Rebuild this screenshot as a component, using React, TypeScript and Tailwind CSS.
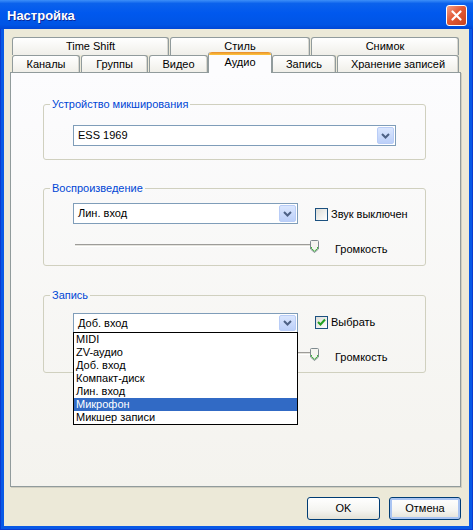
import React from "react";

function Chevron() {
  return (
    <svg width="9" height="6" viewBox="0 0 9 6">
      <path d="M1 1 L4.5 4.5 L8 1" fill="none" stroke="#4d6185" strokeWidth="2" />
    </svg>
  );
}

function ComboBox({ value, className }: { value: string; className: string }) {
  return (
    <div className={`flex items-stretch border border-[#7f9db9] bg-white p-[1px] ${className}`}>
      <span className="flex flex-1 items-center pl-[3px]">{value}</span>
      <span className="flex w-[17px] items-center justify-center rounded-[2px] border border-[#b9cdf7] bg-[linear-gradient(180deg,#dae6fe,#bcd0f9)]">
        <Chevron />
      </span>
    </div>
  );
}

function CheckBox({ checked, label }: { checked?: boolean; label: string }) {
  return (
    <div className="flex items-center gap-[3px]">
      <span className="flex h-[13px] w-[13px] items-center justify-center border border-[#1c5180] bg-[linear-gradient(135deg,#dcdcd7,#ffffff)]">
        {checked && (
          <svg width="9" height="9" viewBox="0 0 9 9">
            <path d="M1 4 L3.5 6.5 L8 1.5" fill="none" stroke="#21a121" strokeWidth="2" />
          </svg>
        )}
      </span>
      <span>{label}</span>
    </div>
  );
}

function Thumb() {
  return (
    <svg width="9" height="13" viewBox="0 0 9 13" className="-ml-[1px]">
      <path
        d="M1.5 0.5 H7.5 Q8.5 0.5 8.5 1.5 V9 L4.5 12.5 L0.5 9 V1.5 Q0.5 0.5 1.5 0.5Z"
        fill="#f5f4ef"
        stroke="#7f8a8f"
      />
      <path d="M1.5 7 V8.6 L4.5 11.2 L7.5 8.6 V7" fill="none" stroke="#3bb33b" />
    </svg>
  );
}

function VolumeRow({ className }: { className: string }) {
  return (
    <div className={`flex items-start pl-[2px] ${className}`}>
      <div className="mt-[4px] h-[3px] w-[236px] border-t border-b border-t-[#9d9c99] border-b-white bg-[#e4e3dd]" />
      <Thumb />
      <span className="ml-[16px] mt-[3px]">Громкость</span>
    </div>
  );
}

function GroupBox({
  title,
  className,
  children,
}: {
  title: string;
  className: string;
  children: React.ReactNode;
}) {
  return (
    <fieldset className={`ml-[32px] w-[383px] rounded-[3px] border border-[#d0d0bf] ${className}`}>
      <legend className="ml-[6px] px-[2px] leading-[13px] text-[#0046d5]">{title}</legend>
      <div className="pl-[29px]">{children}</div>
    </fieldset>
  );
}

function Tab({ label, className }: { label: string; className: string }) {
  return (
    <div
      className={`flex items-center justify-center rounded-t-[3px] border border-b-0 border-[#919b9c] bg-[linear-gradient(180deg,#ffffff,#f0efe9)] shadow-[inset_-1px_0_0_#d8d7cf] ${className}`}
    >
      {label}
    </div>
  );
}

const recordSources = [
  "MIDI",
  "ZV-аудио",
  "Доб. вход",
  "Компакт-диск",
  "Лин. вход",
  "Микрофон",
  "Микшер записи",
];

export default function App() {
  return (
    <div className="flex h-[530px] w-[473px] flex-col bg-[#0054e3] font-['Liberation_Sans',Arial,sans-serif] text-[11px] leading-[13px] text-black">
      <div className="flex h-[29px] items-center justify-between bg-[linear-gradient(180deg,#3d8ff8_0%,#0b62ec_12%,#0058ee_45%,#0055e5_85%,#0047d6_100%)] pl-[7px] pr-[6px] pt-[1px]">
        <span className="text-[13px] font-bold text-white [text-shadow:1px_1px_0_#0a2a9a]">Настройка</span>
        <div className="flex h-[21px] w-[21px] items-center justify-center rounded-[3px] border border-white bg-[linear-gradient(135deg,#f3a088,#e35a35_45%,#c8431f)]">
          <svg width="11" height="11" viewBox="0 0 11 11">
            <path d="M1.5 1.5 L9.5 9.5 M9.5 1.5 L1.5 9.5" stroke="#fff" strokeWidth="2.2" strokeLinecap="round" />
          </svg>
        </div>
      </div>

      <div className="flex flex-1 flex-col border-x border-b border-[#0a3bd0] bg-[#0859e6] px-[3px] pb-[3px]">
        <div className="flex flex-1 flex-col bg-[#ece9d8] pl-[6px] pr-[8px] pt-[8px]">
          <div className="flex h-[18px] gap-[1px] pl-[2px]">
            <Tab label="Time Shift" className="h-[18px] w-[157px]" />
            <Tab label="Стиль" className="h-[18px] w-[140px]" />
            <Tab label="Снимок" className="h-[18px] w-[148px]" />
          </div>
          <div className="relative z-10 flex h-[17px] items-end pl-[2px]">
            <Tab label="Каналы" className="h-[17px] w-[68px]" />
            <Tab label="Группы" className="ml-[1px] h-[17px] w-[67px]" />
            <Tab label="Видео" className="ml-[1px] h-[17px] w-[59px]" />
            <div className="-mb-[1px] flex h-[21px] w-[64px] flex-col rounded-t-[3px] border-x border-[#919b9c] bg-[#fcfcfe]">
              <div className="h-[3px] rounded-t-[3px] bg-[linear-gradient(180deg,#e68b2c,#ffc73c)]" />
              <div className="flex flex-1 items-center justify-center pb-[3px]">Аудио</div>
            </div>
            <Tab label="Запись" className="h-[17px] w-[64px]" />
            <Tab label="Хранение записей" className="ml-[1px] h-[17px] w-[122px]" />
          </div>

          <div className="flex h-[415px] flex-col border border-[#919b9c] bg-[linear-gradient(180deg,#fcfcfe,#f4f3ee)] shadow-[1px_1px_0_#d0cec0]">
            <GroupBox title="Устройство микширования" className="mt-[25px] pb-[13px]">
              <ComboBox value="ESS 1969" className="mt-[14px] h-[21px] w-[323px]" />
            </GroupBox>

            <GroupBox title="Воспроизведение" className="mt-[22px] pb-[9px]">
              <div className="mt-[8px] flex items-center">
                <ComboBox value="Лин. вход" className="h-[21px] w-[225px]" />
                <div className="ml-[17px] mt-[2px]">
                  <CheckBox label="Звук выключен" />
                </div>
              </div>
              <VolumeRow className="mt-[16px]" />
            </GroupBox>

            <GroupBox title="Запись" className="mt-[23px] pb-[8px]">
              <div className="relative mt-[11px] flex items-center">
                <ComboBox value="Доб. вход" className="h-[20px] w-[225px]" />
                <div className="ml-[17px] -mt-[2px]">
                  <CheckBox checked label="Выбрать" />
                </div>
                <div className="absolute left-0 top-[19px] z-20 w-[225px] border border-black bg-white">
                  {recordSources.map((item) => (
                    <div
                      key={item}
                      className={`h-[13px] pl-[2px] leading-[13px] ${
                        item === "Микрофон" ? "bg-[#316ac5] text-white" : ""
                      }`}
                    >
                      {item}
                    </div>
                  ))}
                </div>
              </div>
              <VolumeRow className="mt-[15px]" />
            </GroupBox>
          </div>

          <div className="mt-[10px] flex justify-end gap-[9px]">
            <button className="h-[23px] w-[73px] rounded-[3px] border border-[#003c74] bg-[linear-gradient(180deg,#ffffff,#f4f4f0_60%,#e3e1d6)]">
              OK
            </button>
            <button className="h-[23px] w-[72px] rounded-[3px] border border-[#003c74] bg-[linear-gradient(180deg,#ffffff,#f4f4f0_60%,#e3e1d6)] shadow-[inset_0_0_0_2px_#a9c4f2]">
              Отмена
            </button>
          </div>
        </div>
      </div>
    </div>
  );
}
